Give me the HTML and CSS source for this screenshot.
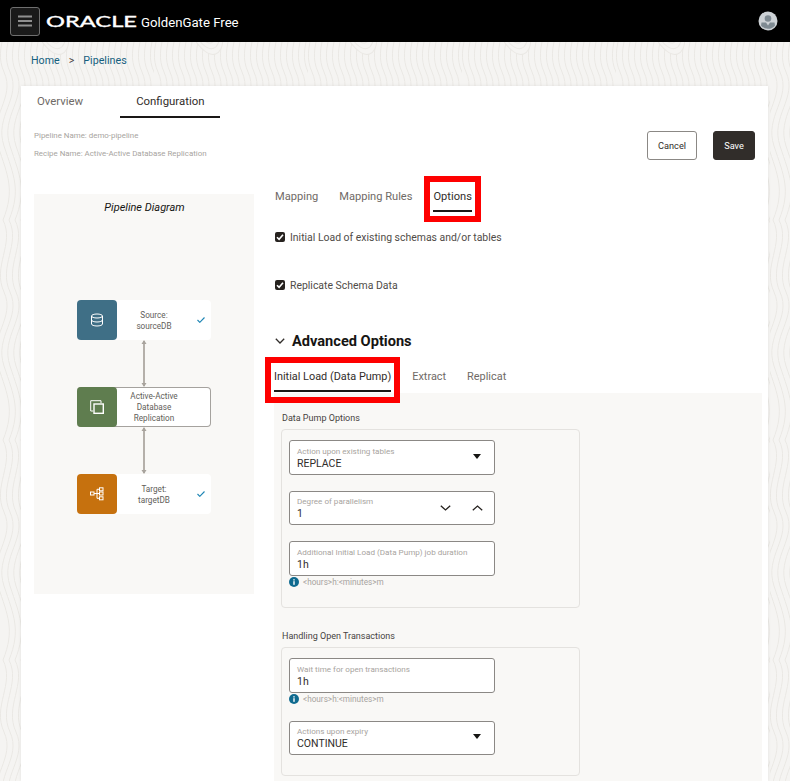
FILE: index.html
```html
<!DOCTYPE html>
<html lang="en">
<head>
<meta charset="utf-8">
<title>GoldenGate Free</title>
<link rel="stylesheet" href="styles.css">
</head>
<body>
<svg class="texture" width="790" height="781" aria-hidden="true">
  <defs>
    <g id="wave"><path d="M3 0c12 24-11 46 1 72s-16 44-6 74 17 44 5 74"/></g>
    <g id="rings">
      <ellipse cx="0" cy="0" rx="34" ry="16" class="ring-base"/>
      <ellipse cx="0" cy="0" rx="28" ry="13"/><ellipse cx="0" cy="0" rx="22" ry="10"/><ellipse cx="0" cy="0" rx="16" ry="7"/><ellipse cx="0" cy="0" rx="10" ry="4"/>
    </g>
    <pattern id="topo" width="154" height="220" patternUnits="userSpaceOnUse">
      <use href="#wave" x="0"/><use href="#wave" x="6"/><use href="#wave" x="12"/><use href="#wave" x="18"/><use href="#wave" x="24"/><use href="#wave" x="30"/><use href="#wave" x="36"/><use href="#wave" x="42"/><use href="#wave" x="48"/><use href="#wave" x="54"/><use href="#wave" x="60"/><use href="#wave" x="66"/><use href="#wave" x="72"/><use href="#wave" x="78"/><use href="#wave" x="84"/><use href="#wave" x="90"/><use href="#wave" x="96"/><use href="#wave" x="102"/><use href="#wave" x="108"/><use href="#wave" x="114"/><use href="#wave" x="120"/><use href="#wave" x="126"/><use href="#wave" x="132"/><use href="#wave" x="138"/><use href="#wave" x="144"/><use href="#wave" x="150"/>
      <use href="#rings" transform="translate(50 22) rotate(70)"/>
      <use href="#rings" transform="translate(120 170) rotate(100)"/>
    </pattern>
  </defs>
  <rect class="texture-fill" width="790" height="781"/>
</svg>

<header class="topbar">
  <button class="menu-btn" aria-label="Menu">
    <svg width="14" height="12" viewBox="0 0 14 12"><path d="M0 1.500h14M0 6h14M0 10.500h14"/></svg>
  </button>
  <svg class="logo" width="92" height="16" viewBox="0 0 92 16" aria-label="Oracle"><text x="0" y="13" textLength="91" lengthAdjust="spacingAndGlyphs">ORACLE</text></svg>
  <span class="product">GoldenGate Free</span>
  <span class="avatar">
    <svg width="20" height="20" viewBox="0 0 20 20"><circle cx="10" cy="10" r="9.500" class="av-bg"/><circle cx="10" cy="7.500" r="3.300" class="av-fg"/><path class="av-fg" d="M3.500 11.500h4.500l2 3 2-3h4.500l.5 3a9 9 0 0 1-14 0z"/></svg>
  </span>
</header>

<nav class="crumbs"><a>Home</a><span class="sep">&gt;</span><a>Pipelines</a></nav>

<main class="card">
  <div class="top-tabs">
    <div class="top-tab">Overview</div>
    <div class="top-tab active">Configuration</div>
  </div>

  <div class="meta-row">
    <div class="meta">
      <div>Pipeline Name: demo-pipeline</div>
      <div>Recipe Name: Active-Active Database Replication</div>
    </div>
    <div class="actions">
      <button class="btn">Cancel</button>
      <button class="btn primary">Save</button>
    </div>
  </div>

  <div class="workspace">
    <section class="diagram">
      <h2 class="diagram-title">Pipeline Diagram</h2>
      <div class="nodes">
        <div class="node">
          <span class="node-icon blue">
            <svg width="14" height="14" viewBox="0 0 14 14"><ellipse cx="7" cy="3" rx="5.500" ry="2"/><path d="M1.500 3v8c0 1.100 2.500 2 5.500 2s5.500-.9 5.500-2V3M1.500 7c0 1.100 2.500 2 5.500 2s5.500-.9 5.500-2"/></svg>
          </span>
          <span class="node-text">Source:<br>sourceDB</span>
          <svg class="tick" width="8" height="6" viewBox="0 0 8 6"><path d="M.5 3l2.300 2.300L7.500.5"/></svg>
        </div>
        <svg class="link" width="6" height="47" viewBox="0 0 6 47"><path d="M3 1v45" class="link-line"/><path d="M3 0l2.500 4h-5zM3 47l2.500-4h-5z" class="link-head"/></svg>
        <div class="node outlined">
          <span class="node-icon green">
            <svg width="14" height="14" viewBox="0 0 14 14"><path d="M3 11H.7V.7H11V3"/><rect x="4" y="4" width="9.300" height="9.300" class="thick"/></svg>
          </span>
          <span class="node-text">Active-Active<br>Database<br>Replication</span>
        </div>
        <svg class="link" width="6" height="47" viewBox="0 0 6 47"><path d="M3 1v45" class="link-line"/><path d="M3 0l2.500 4h-5zM3 47l2.500-4h-5z" class="link-head"/></svg>
        <div class="node">
          <span class="node-icon orange">
            <svg width="14" height="14" viewBox="0 0 14 14"><rect x=".5" y="5" width="3.500" height="3"/><rect x="9.500" y=".8" width="3.500" height="3"/><rect x="9.500" y="5" width="3.500" height="3"/><rect x="9.500" y="9.800" width="3.500" height="3"/><path d="M4 6.500h5.500M7 2.300v9h2.500M7 2.300h2.500"/></svg>
          </span>
          <span class="node-text">Target:<br>targetDB</span>
          <svg class="tick" width="8" height="6" viewBox="0 0 8 6"><path d="M.5 3l2.300 2.300L7.500.5"/></svg>
        </div>
      </div>
    </section>

    <section class="config">
      <div class="tabs">
        <div class="tab">Mapping</div>
        <div class="tab">Mapping Rules</div>
        <div class="tab active marked options">Options</div>
      </div>

      <label class="check first"><span class="box"><svg width="10" height="10" viewBox="0 0 10 10"><path d="M2 5.200l2.100 2.100L8 2.800"/></svg></span>Initial Load of existing schemas and/or tables</label>
      <label class="check second"><span class="box"><svg width="10" height="10" viewBox="0 0 10 10"><path d="M2 5.200l2.100 2.100L8 2.800"/></svg></span>Replicate Schema Data</label>

      <h3 class="advanced">
        <svg width="10" height="6" viewBox="0 0 10 6"><path d="M.8.800L5 5l4.200-4.200"/></svg>
        Advanced Options
      </h3>

      <div class="tabs sub">
        <div class="tab active marked load">Initial Load (Data Pump)</div>
        <div class="tab">Extract</div>
        <div class="tab">Replicat</div>
      </div>

      <div class="panel">
        <div class="group-label">Data Pump Options</div>
        <div class="group">
          <div class="field">
            <div class="field-main"><span class="field-label">Action upon existing tables</span><span class="field-value">REPLACE</span></div>
            <svg class="caret" width="8" height="5" viewBox="0 0 8 5"><path d="M0 0h8L4 5z"/></svg>
          </div>
          <div class="field short spaced">
            <div class="field-main"><span class="field-label">Degree of parallelism</span><span class="field-value">1</span></div>
            <svg class="spin down" width="11" height="6" viewBox="0 0 11 6"><path d="M.8.800l4.700 4.200L10.200.800"/></svg>
            <svg class="spin" width="11" height="6" viewBox="0 0 11 6"><path d="M.8 5.200l4.700-4.200 4.700 4.200"/></svg>
          </div>
          <div class="field spaced">
            <div class="field-main"><span class="field-label">Additional Initial Load (Data Pump) job duration</span><span class="field-value">1h</span></div>
          </div>
          <div class="helper">
            <svg width="10" height="10" viewBox="0 0 10 10"><circle cx="5" cy="5" r="5"/><rect x="4.300" y="4.200" width="1.400" height="3.600"/><rect x="4.300" y="2.200" width="1.400" height="1.300"/></svg>
            &lt;hours&gt;h:&lt;minutes&gt;m
          </div>
        </div>

        <div class="group-label second">Handling Open Transactions</div>
        <div class="group">
          <div class="field">
            <div class="field-main"><span class="field-label">Wait time for open transactions</span><span class="field-value">1h</span></div>
          </div>
          <div class="helper">
            <svg width="10" height="10" viewBox="0 0 10 10"><circle cx="5" cy="5" r="5"/><rect x="4.300" y="4.200" width="1.400" height="3.600"/><rect x="4.300" y="2.200" width="1.400" height="1.300"/></svg>
            &lt;hours&gt;h:&lt;minutes&gt;m
          </div>
          <div class="field short after-helper">
            <div class="field-main"><span class="field-label">Actions upon expiry</span><span class="field-value">CONTINUE</span></div>
            <svg class="caret" width="8" height="5" viewBox="0 0 8 5"><path d="M0 0h8L4 5z"/></svg>
          </div>
        </div>
      </div>
    </section>
  </div>
</main>
</body>
</html>
```
FILE: styles.css
```css
* { box-sizing: border-box; }
html, body { margin: 0; height: 781px; overflow: hidden; }
body {
  font-family: "Roboto", "Noto Sans", sans-serif;
  font-size: 11px;
  color: #312d2a;
  background: #f5f4f2;
}
h2, h3 { margin: 0; font: inherit; }

.texture { position: absolute; left: 0; top: 0; z-index: -1; }
.texture path, .texture ellipse { fill: none; stroke: #eae8e4; stroke-width: 1; }
.texture .ring-base { fill: #f5f4f2; }
.texture .texture-fill { fill: url(#topo); }

.topbar {
  height: 42px;
  background: #000;
  display: flex;
  align-items: center;
  padding: 0 12px 0 10px;
}
.menu-btn {
  width: 30px;
  height: 29px;
  padding: 0;
  background: #1a1a1a;
  border: 1px solid #6f6f6f;
  border-radius: 3px;
  display: flex;
  align-items: center;
  justify-content: center;
}
.menu-btn path { stroke: #8f8f8f; stroke-width: 1.800; fill: none; }
.logo { margin: 1px 0 0 6px; }
.logo text { font-family: "Lato", sans-serif; font-size: 14.500px; font-weight: 400; fill: #fff; stroke: #fff; stroke-width: .35; }
.product { margin: 3px 0 0 3px; color: #fff; font-size: 13.200px; }
.avatar { margin-left: auto; display: flex; }
.av-bg { fill: #cdd2d6; }
.av-fg { fill: #7e8a92; }

.crumbs {
  height: 44px;
  padding: 10px 0 0 31px;
  font-size: 10.700px;
  line-height: 18px;
  color: #155f7f;
  display: flex;
}
.crumbs .sep { margin: 0 9px 0 9px; color: #47433f; }

.card {
  margin: 0 22px 0 21px;
  height: 695px;
  overflow: hidden;
  background: #fff;
  box-shadow: 0 0 3px rgba(0, 0, 0, .08);
}
.top-tabs { display: flex; height: 32px; }
.top-tab {
  padding: 0 16px;
  margin-right: 21px;
  line-height: 30px;
  font-size: 11.400px;
  color: #6f6a66;
}
.top-tab.active { color: #312d2a; border-bottom: 2px solid #1a1816; }

.meta-row {
  display: flex;
  justify-content: space-between;
  padding: 8px 13px 0;
}
.meta { font-size: 7.900px; line-height: 18px; color: #a8a4a0; padding-top: 1px; }
.actions { display: flex; gap: 16px; padding-top: 5px; }
.btn {
  height: 29px;
  width: 50px;
  padding: 0;
  background: #fff;
  border: 1px solid #8b8885;
  border-radius: 3px;
  font: inherit;
  font-size: 9.200px;
  color: #312d2a;
}
.btn.primary { width: 42px; background: #312d2a; border-color: #312d2a; color: #fff; }

.workspace { display: flex; gap: 21px; padding-left: 13px; margin-top: 17px; align-items: flex-start; }

.diagram {
  width: 220px;
  height: 400px;
  margin-top: 14px;
  background: #f9f8f6;
  display: flex;
  flex-direction: column;
}
.diagram-title {
  height: 26px;
  line-height: 27px;
  text-align: center;
  font-style: italic;
  font-size: 11px;
  color: #161513;
  padding-left: 1px;
}
.nodes { flex: 1; display: flex; flex-direction: column; align-items: center; justify-content: center; }
.node {
  width: 134px;
  height: 40px;
  background: #fff;
  border-radius: 4px;
  display: flex;
  align-items: center;
  position: relative;
}
.node.outlined { border: 1px solid #a5a29e; border-left: 0; }
.node-icon {
  width: 40px;
  height: 40px;
  border-radius: 4px;
  flex: none;
  display: flex;
  align-items: center;
  justify-content: center;
}
.node.outlined .node-icon { margin: -1px 0; }
.node-icon svg * { fill: none; stroke: #fff; stroke-width: 1; }
.node-icon svg .thick { stroke-width: 1.400; }
.blue { background: #3f6f86; }
.green { background: #5f7d4f; }
.orange { background: #c6710e; }
.node-text {
  flex: 1;
  text-align: center;
  font-size: 8.200px;
  line-height: 11px;
  color: #625e5a;
  padding: 1px 24px 0 4px;
}
.node.outlined .node-text { padding: 1px 23px 0 4px; }
.tick { position: absolute; right: 6px; top: 17px; fill: none; stroke: #1f86b5; stroke-width: 1.150; }
.link { display: block; }
.link-line { stroke: #b5b0aa; stroke-width: 2; }
.link-head { fill: #a8a39d; }

.config { flex: 1; margin-right: 6px; }
.tabs { display: flex; gap: 21px; height: 32px; }
.tab {
  height: 32px;
  line-height: 33px;
  font-size: 11.100px;
  color: #6f6a66;
  position: relative;
  border-bottom: 2px solid transparent;
  white-space: nowrap;
}
.tab.active { color: #312d2a; border-bottom-color: #1a1816; }
.marked::before {
  content: "";
  position: absolute;
  border: 6px solid #fe0000;
}
.options::before { left: -9px; right: -9px; top: -4px; bottom: -12px; }
.load::before { left: -9px; right: -9px; top: -3px; bottom: -13px; }
.load { margin-left: -1px; }

.check {
  display: flex;
  align-items: center;
  gap: 5px;
  height: 16px;
  font-size: 10.450px;
  color: #504c48;
}
.check.first { margin-top: 17px; }
.check.second { margin-top: 32px; }
.box {
  width: 10px;
  height: 10px;
  background: #26221f;
  border-radius: 2px;
  display: flex;
}
.box path { fill: none; stroke: #fff; stroke-width: 1.600; }

.advanced {
  height: 20px;
  margin-top: 38px;
  display: flex;
  align-items: center;
  gap: 7px;
  font-size: 14.600px;
  font-weight: 700;
  color: #161513;
}
.advanced path { fill: none; stroke: #312d2a; stroke-width: 1.300; }

.tabs.sub { margin-top: 9px; }
.tabs.sub .tab { font-size: 10.900px; }

.panel {
  margin: 1px 0 0 -1px;
  padding: 17px 7px 20px;
  background: #f9f8f6;
}
.group-label { height: 16px; line-height: 17px; font-size: 9px; color: #47433f; padding-left: 1px; }
.group-label.second { margin-top: 20px; }
.group {
  width: 299px;
  margin-top: 3px;
  padding: 10px 7px 20px;
  background: #f9f8f6;
  border: 1px solid #e4e2df;
  border-radius: 4px;
}
.field {
  width: 206px;
  height: 35px;
  background: #fff;
  border: 1px solid #8b8885;
  border-radius: 3px;
  padding: 0 7px;
  display: flex;
  align-items: center;
}
.field.short { height: 34px; }
.field.spaced { margin-top: 16px; }
.field.after-helper { margin-top: 17px; }
.field-main { flex: 1; display: flex; flex-direction: column; min-width: 0; }
.field-label { font-size: 8.100px; line-height: 11px; color: #a8a4a0; white-space: nowrap; }
.field-value { font-size: 10.500px; line-height: 13px; color: #312d2a; }
.caret { fill: #161513; margin: -3px 6px 0 0; }
.spin { fill: none; stroke: #26221f; stroke-width: 1.300; margin-right: 4px; }
.spin.down { margin-right: 21px; }
.helper {
  height: 11px;
  display: flex;
  align-items: center;
  gap: 4px;
  font-size: 8.200px;
  color: #a8a4a0;
}
.helper circle { fill: #0f6a8f; }
.helper rect { fill: #fff; }
```
